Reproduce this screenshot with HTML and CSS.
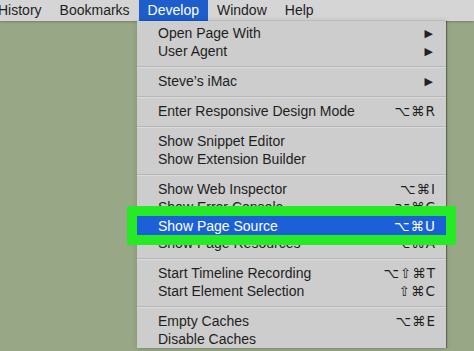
FILE: index.html
```html
<!DOCTYPE html>
<html lang="en">
<head>
    <meta charset="UTF-8">
    <meta name="viewport" content="width=device-width, initial-scale=1.0">
    <title>Develop menu</title>
    <link rel="stylesheet" href="styles.css">
</head>
<body>
    <div class="menubar">
        <span class="bar-item first">History</span>
        <span class="bar-item">Bookmarks</span>
        <span class="bar-item active">Develop</span>
        <span class="bar-item">Window</span>
        <span class="bar-item">Help</span>
    </div>

    <div class="dropdown">
        <div class="row"><span>Open Page With</span><span class="arrow">&#9654;</span></div>
        <div class="row"><span>User Agent</span><span class="arrow">&#9654;</span></div>
        <div class="sep"></div>
        <div class="row"><span>Steve’s iMac</span><span class="arrow">&#9654;</span></div>
        <div class="sep"></div>
        <div class="row"><span>Enter Responsive Design Mode</span><span class="keys">⌥⌘R</span></div>
        <div class="sep"></div>
        <div class="row"><span>Show Snippet Editor</span></div>
        <div class="row"><span>Show Extension Builder</span></div>
        <div class="sep"></div>
        <div class="row"><span>Show Web Inspector</span><span class="keys">⌥⌘I</span></div>
        <div class="row"><span>Show Error Console</span><span class="keys">⌥⌘C</span></div>
        <div class="row selected"><span>Show Page Source</span><span class="keys">⌥⌘U</span></div>
        <div class="row"><span>Show Page Resources</span><span class="keys">⌥⌘A</span></div>
        <div class="sep"></div>
        <div class="row"><span>Start Timeline Recording</span><span class="keys">⌥⇧⌘T</span></div>
        <div class="row"><span>Start Element Selection</span><span class="keys">⇧⌘C</span></div>
        <div class="sep"></div>
        <div class="row"><span>Empty Caches</span><span class="keys">⌥⌘E</span></div>
        <div class="row"><span>Disable Caches</span></div>
    </div>
</body>
</html>
```

FILE: styles.css
```css
body {
    margin: 0;
    height: 351px;
    overflow: hidden;
    background-color: #98a886;
    font-family: 'Liberation Sans', Arial, 'DejaVu Sans', sans-serif;
    font-size: 14px;
    color: #1e1e1e;
}
.menubar {
    display: flex;
    height: 21px;
    background-color: #d5d5d5;
    box-shadow: 0 1px 2px rgba(0,0,0,0.25);
}
.bar-item {
    display: flex;
    align-items: center;
    padding: 0 9px;
    line-height: 21px;
}
.bar-item.first {
    margin-left: -11px;
}
.bar-item.active {
    background-color: #1d5dcc;
    color: white;
}
.dropdown {
    position: absolute;
    left: 137px;
    top: 21px;
    width: 309px;
    padding-top: 3px;
    background-color: #cdcdcd;
    box-shadow: 1px 0 1px rgba(0,0,0,0.35), 0 0 6px rgba(0,0,0,0.15);
}
.row {
    display: flex;
    justify-content: space-between;
    align-items: center;
    height: 18px;
    padding: 0 10px 0 21px;
}
.arrow {
    font-family: 'DejaVu Sans', sans-serif;
    font-size: 11px;
    margin-right: 3px;
    color: #222;
}
.keys {
    letter-spacing: 1px;
    font-family: 'DejaVu Sans', sans-serif;
    font-size: 13.5px;
}
.sep {
    height: 12px;
    display: flex;
    align-items: center;
}
.sep::before {
    content: '';
    flex: 1;
    height: 1px;
    background-color: #b6b6b6;
    box-shadow: 0 1px 0 #dadada;
}
.row.selected {
    position: relative;
    z-index: 1;
    height: 19px;
    margin-bottom: -1px;
    background-color: #1c60d8;
    color: white;
    box-shadow: 0 0 0 1px #e8f0ff;
    outline: 10px solid #25ea25;
}
```
